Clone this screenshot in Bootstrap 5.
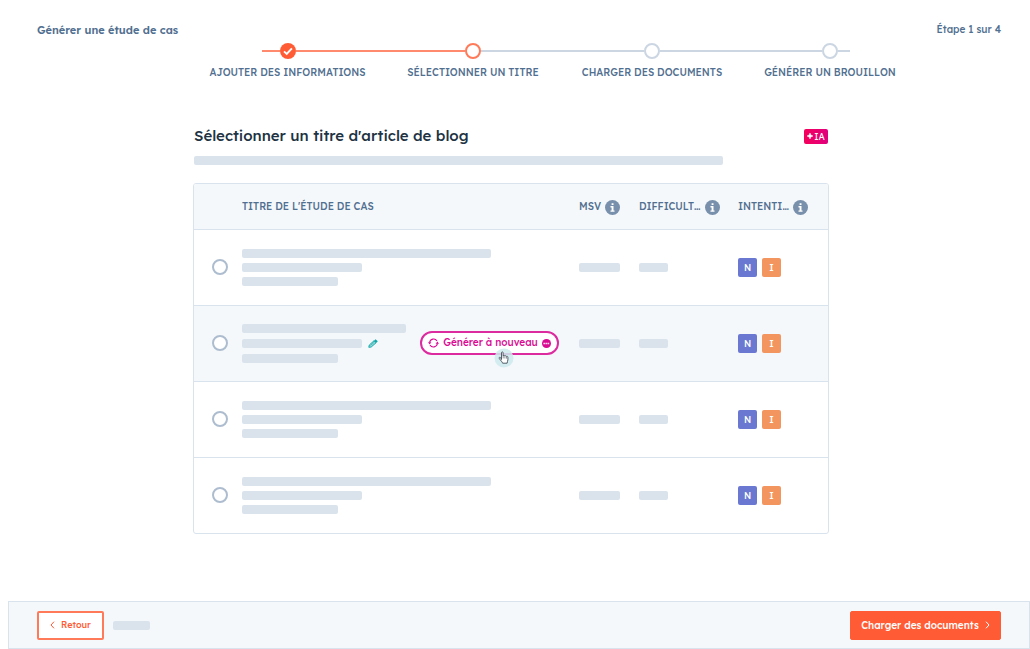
<!DOCTYPE html>
<html lang="fr">
<head>
<meta charset="utf-8">
<meta name="viewport" content="width=device-width, initial-scale=1">
<title>Générer une étude de cas</title>
<link href="https://cdn.jsdelivr.net/npm/bootstrap@5.3.0/dist/css/bootstrap.min.css" rel="stylesheet">
<style>
:root { --slate:#516f90; --line:#d9e3ed; --fill:#dae3ec; --pale:#f5f8fb; --orange:#ff5c35; --pink:#d80b93; }
body { font-family:"Lexend Deca", Inter, sans-serif; font-feature-settings:"cv08","cv11"; font-size:10px; line-height:16px; color:var(--slate); background:#fff; }
.wizard-title { font-size:11px; font-weight:600; }
.wizard-count { font-weight:500; }
.topline { padding:22px 29px 0 37px; height:43px; }
.stepper { display:grid; grid-template-columns:195fr 185fr 186fr 172fr 184fr 108fr; }
.stepper li:first-child { grid-column:2; }
.step-track span { height:2px; flex:1; background:#cbd6e2; }
.step-track .done { background:#ff8a6e; }
.step-track .cap-start { flex:0 0 18px; }
.step-track .cap-end { flex:0 0 12px; }
.step-end { flex:1; }
.dot { width:16px; height:16px; border:2px solid #cbd6e2; border-radius:50%; flex:none; }
.dot.active { border-color:#ff7a59; }
.step-name { font-weight:500; margin-top:6px; white-space:nowrap; display:flex; justify-content:center; }
.panel { max-width:644px; width:100%; padding-right:8px; margin-top:45px; }
.intro { padding:0 1px; }
h1 { font-size:15px; line-height:20px; font-weight:500; color:#213343; }
.ai-tag { background:linear-gradient(90deg,#f5005b,#e0007e); color:#fff; border-radius:2px; height:15px; width:24px; line-height:15px; font-size:9px; }
.bar { display:block; height:9px; border-radius:2px; background:var(--fill); }
.w-intro { width:529px; max-width:84%; margin-top:10px; } .w-long { width:249px; } .w-mid { width:164px; } .w-120 { width:120px; } .w-96 { width:96px; } .w-41 { width:41px; } .w-29 { width:29px; } .w-37 { width:37px; }
.gap-4px { gap:4px; } .gap-5px { gap:5px; } .gap-6px { gap:6px; } .gap-9px { gap:9px; }
.sheet { border:1px solid var(--line); border-radius:3px; overflow:hidden; margin-top:18px; }
.sheet table { table-layout:fixed; width:100%; }
.sheet th, .sheet td { padding:0; vertical-align:middle; }
.sheet th { font-weight:500; height:45px; padding-top:2px; white-space:nowrap; }
.sheet thead, .sheet .picked { background:var(--pale); }
.sheet td { height:76px; border-top:1px solid var(--line); }
.col-pick { width:48px; } .col-msv { width:60px; } .col-diff { width:99px; } .col-intent { width:90px; }
.pick.form-check-input { width:16px; height:16px; margin:0 0 0 18px; border:2px solid #adbdcf; display:block; float:none; background-color:#fff; }
.tag { width:19px; height:19px; border-radius:2px; color:#fff; font-size:9px; font-weight:500; line-height:19px; text-align:center; }
.tag-n { background:#6a78d1; } .tag-i { background:#f2955f; }
.title-cell { padding-right:20px; }
.regen { height:24px; width:139px; border:2px solid #dc2a9f; border-radius:12px; background:#fff; color:var(--pink); font-weight:500; line-height:16px; white-space:nowrap; }
.pointer { position:absolute; left:74px; top:17px; }
.actions { margin-left:8px; padding:9px 28px; border:1px solid var(--line); background:var(--pale); height:48px; }
.btn-act { --bs-btn-font-size:10px; --bs-btn-padding-x:12px; --bs-btn-padding-y:0; --bs-btn-border-radius:2px; --bs-btn-font-weight:500; height:29px; display:flex; align-items:center; white-space:nowrap; }
.btn-back { --bs-btn-font-size:9px; --bs-btn-color:var(--orange); --bs-btn-border-color:#ff7a59; --bs-btn-border-width:2px; --bs-btn-padding-x:8px; --bs-btn-bg:#fff; width:67px; }
.btn-next { --bs-btn-color:#fff; --bs-btn-bg:var(--orange); --bs-btn-border-color:var(--orange); width:151px; }
svg { flex:none; display:block; }
</style>
</head>
<body class="d-flex flex-column min-vh-100">
<svg width="0" height="0" class="position-absolute" aria-hidden="true">
  <symbol id="info" viewBox="0 0 15 15"><circle cx="7.5" cy="7.5" r="7.5" fill="#7890ab"/><path d="M6.6 3.2h1.9v1.7H6.600zM5.500 6.100h3v4.300h1v1.300H5.500v-1.300h1.100V7.400H5.500z" fill="#fff"/></symbol>
</svg>
<header>
  <div class="topline d-flex justify-content-between">
    <div class="wizard-title">Générer une étude de cas</div>
    <div class="wizard-count">Étape 1 sur 4</div>
  </div>
  <ol class="stepper list-unstyled mb-0">
    <li>
      <div class="step-track d-flex align-items-center"><div class="step-end d-flex justify-content-end"><span class="done cap-start"></span></div>
        <svg width="16" height="16" viewBox="0 0 16 16"><circle cx="8" cy="8" r="8" fill="#ff5c35"/><path d="M4 8.400l2.700 2.500L11.900 5.300" fill="none" stroke="#fff" stroke-width="1.900"/></svg>
        <span class="done"></span></div>
      <div class="step-name">AJOUTER DES INFORMATIONS</div>
    </li>
    <li>
      <div class="step-track d-flex align-items-center"><span class="done"></span><i class="dot active"></i><span></span></div>
      <div class="step-name">SÉLECTIONNER UN TITRE</div>
    </li>
    <li>
      <div class="step-track d-flex align-items-center"><span></span><i class="dot"></i><span></span></div>
      <div class="step-name">CHARGER DES DOCUMENTS</div>
    </li>
    <li>
      <div class="step-track d-flex align-items-center"><span></span><i class="dot"></i><div class="step-end d-flex"><span class="cap-end"></span></div></div>
      <div class="step-name">GÉNÉRER UN BROUILLON</div>
    </li>
  </ol>
</header>
<main class="panel mx-auto">
  <div class="intro">
    <div class="d-flex align-items-center justify-content-between">
      <h1 class="mb-0">Sélectionner un titre d'article de blog</h1>
      <span class="ai-tag d-flex align-items-center justify-content-center"><svg width="6" height="6" viewBox="0 0 6 6"><path d="M3 0l.9 2.100L6 3l-2.100.9L3 6l-.9-2.100L0 3l2.100-.9z" fill="#fff" stroke="#fff" stroke-width=".5"/></svg>&#8202;IA</span>
    </div>
    <span class="bar w-intro"></span>
  </div>
  <div class="sheet">
    <table>
      <colgroup><col class="col-pick"><col><col class="col-msv"><col class="col-diff"><col class="col-intent"></colgroup>
      <thead><tr>
        <th></th><th>TITRE DE L'ÉTUDE DE CAS</th>
        <th><div class="d-flex align-items-center gap-4px">MSV<svg width="15" height="15"><use href="#info"/></svg></div></th>
        <th><div class="d-flex align-items-center gap-4px">DIFFICULT…<svg width="15" height="15"><use href="#info"/></svg></div></th>
        <th><div class="d-flex align-items-center gap-4px">INTENTI…<svg width="15" height="15"><use href="#info"/></svg></div></th>
      </tr></thead>
      <tbody>
        <tr>
          <td><input class="pick form-check-input" type="radio" name="titre" aria-label="Titre 1"></td>
          <td><div class="d-flex flex-column gap-5px"><span class="bar w-long"></span><span class="bar w-120"></span><span class="bar w-96"></span></div></td>
          <td><span class="bar w-41"></span></td><td><span class="bar w-29"></span></td>
          <td><div class="d-flex gap-5px"><span class="tag tag-n">N</span><span class="tag tag-i">I</span></div></td>
        </tr>
        <tr class="picked">
          <td><input class="pick form-check-input" type="radio" name="titre" aria-label="Titre 2"></td>
          <td><div class="title-cell d-flex align-items-center justify-content-between">
            <div class="d-flex flex-column gap-6px"><span class="bar w-mid"></span>
              <div class="d-flex align-items-center gap-6px"><span class="bar w-120"></span><svg width="10" height="9" viewBox="0 0 10 9"><path d="M.8 8.300l.5-2.300L6 1.800l2 2L3.200 8z" fill="#a5dcdc" stroke="#12a8aa" stroke-width="1"/><path d="M6 1.700L7.500.2 9.800 2.300 8.100 4z" fill="#12a8aa"/><path d="M2.500 6.600L6.500 3" stroke="#12a8aa" stroke-width=".7"/></svg></div>
              <span class="bar w-96"></span></div>
            <div class="position-relative">
              <button type="button" class="regen p-0 d-flex align-items-center justify-content-center gap-4px">
                <svg width="11" height="10" viewBox="0 0 11 10" fill="none" stroke="#d80b93" stroke-width="1.100"><path d="M1.600 4.500a4 4 0 0 1 7.400-1.500M9.400 5.500a4 4 0 0 1-7.400 1.500"/><path d="M0 4.200h3.400L1.600 6.400zM11 5.800H7.600l1.800-2.200z" fill="#d80b93" stroke="none"/></svg>
                Générer à nouveau
                <svg width="9" height="9" viewBox="0 0 9 9"><circle cx="4.500" cy="4.500" r="4.500" fill="#d80b93"/><path d="M1.400 4.500h6.200" stroke="#f8d5ec" stroke-width="1.400" stroke-dasharray="1.600 .4"/></svg>
              </button>
              <svg class="pointer" width="20" height="20" viewBox="0 0 20 20"><circle cx="10" cy="10" r="9.500" fill="#cdeaec" fill-opacity=".85"/><path d="M7.500 11.500V4.800c0-1.300 1.600-1.300 1.600 0V8c.4-.8 1.500-.7 1.700 0 .5-.5 1.400-.3 1.600.4.700-.4 1.500 0 1.500.8v2.600c0 1.200-.8 1.800-.8 3.400H8.600c-.3-1.400-1.800-2.400-3.300-4.700-.6-1 .5-1.700 1.200-.9z" fill="#fff" stroke="#444e59" stroke-width=".9"/><path d="M9.200 8v2.400M10.900 8.300v2.200M12.500 8.800v1.800" stroke="#444e59" stroke-width=".6"/></svg>
            </div></div></td>
          <td><span class="bar w-41"></span></td><td><span class="bar w-29"></span></td>
          <td><div class="d-flex gap-5px"><span class="tag tag-n">N</span><span class="tag tag-i">I</span></div></td>
        </tr>
        <tr>
          <td><input class="pick form-check-input" type="radio" name="titre" aria-label="Titre 3"></td>
          <td><div class="d-flex flex-column gap-5px"><span class="bar w-long"></span><span class="bar w-120"></span><span class="bar w-96"></span></div></td>
          <td><span class="bar w-41"></span></td><td><span class="bar w-29"></span></td>
          <td><div class="d-flex gap-5px"><span class="tag tag-n">N</span><span class="tag tag-i">I</span></div></td>
        </tr>
        <tr>
          <td><input class="pick form-check-input" type="radio" name="titre" aria-label="Titre 4"></td>
          <td><div class="d-flex flex-column gap-5px"><span class="bar w-long"></span><span class="bar w-120"></span><span class="bar w-96"></span></div></td>
          <td><span class="bar w-41"></span></td><td><span class="bar w-29"></span></td>
          <td><div class="d-flex gap-5px"><span class="tag tag-n">N</span><span class="tag tag-i">I</span></div></td>
        </tr>
      </tbody>
    </table>
  </div>
</main>
<footer class="actions mt-auto d-flex align-items-center justify-content-between">
  <div class="d-flex align-items-center gap-9px">
    <button type="button" class="btn btn-act btn-back justify-content-center gap-6px"><svg width="5" height="8" viewBox="0 0 5 8"><path d="M4 .7L1 4l3 3.300" fill="none" stroke="currentColor"/></svg>Retour</button>
    <span class="bar w-37"></span>
  </div>
  <button type="button" class="btn btn-act btn-next justify-content-center gap-6px">Charger des documents<svg width="5" height="8" viewBox="0 0 5 8"><path d="M1 .7L4 4 1 7.300" fill="none" stroke="currentColor"/></svg></button>
</footer>
<script src="https://cdn.jsdelivr.net/npm/bootstrap@5.3.0/dist/js/bootstrap.bundle.min.js"></script>
</body>
</html>
